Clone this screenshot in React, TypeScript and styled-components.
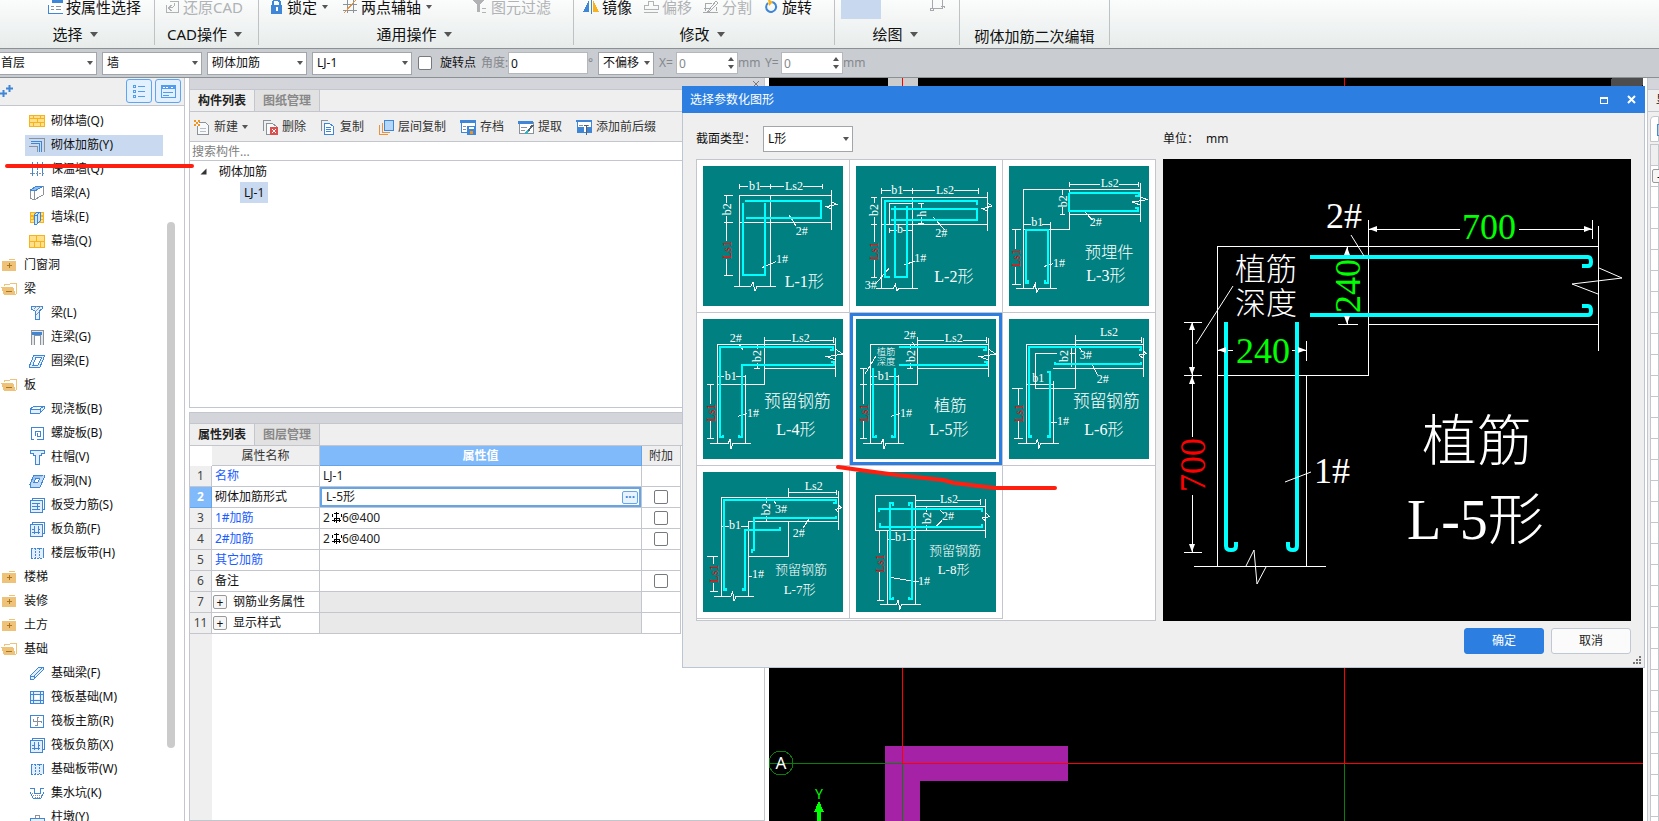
import React from 'react';
import styled, { createGlobalStyle } from 'styled-components';

const line = '#c3c6cc';
const face = '#efefef';
const blue = '#2c7fe0';
const uiFont = '"Noto Sans", "Noto Sans CJK SC", sans-serif';
const drawingFont = '"Liberation Serif", "Noto Sans CJK SC", serif';

const GlobalStyle = createGlobalStyle`
  *, *::before, *::after { box-sizing: border-box; }
  body { margin: 0; font: 12px/16px ${uiFont}; color: #111; background: #fff; }
  button, input, select { font: inherit; color: inherit; margin: 0; padding: 0; border: 0; background: none; }
  ul { margin: 0; padding: 0; list-style: none; }
  svg { display: block; flex: none; }
`;

const Page = styled.div`
  position: relative;
  display: flex;
  flex-direction: column;
  height: 100vh;
  overflow: hidden;
`;

/* ---------- ribbon ---------- */

const Ribbon = styled.header`
  display: flex;
  flex: none;
  height: 49px;
  border-bottom: 1px solid #8b9093;
  background: linear-gradient(#fbfcfc, #e7eceb);
  font-size: 15px;
`;

const RibbonGroup = styled.section<{ $width: number }>`
  width: ${p => p.$width}px;
  height: 45px;
  border-right: 1px solid #bfc2c4;
  display: flex;
  flex-direction: column;
`;

const RibbonTools = styled.div<{ $indent?: number }>`
  display: flex;
  align-items: center;
  height: 14px;
  flex: none;
  padding-left: ${p => p.$indent ?? 9}px;
  line-height: 14px;
`;

const RibbonButton = styled.button<{ $before?: number }>`
  display: flex;
  align-items: center;
  gap: 3px;
  height: 14px;
  margin-left: ${p => p.$before ?? 0}px;
  line-height: 14px;
  white-space: nowrap;
  &:disabled { color: #b0b2b4; }
`;

const DrawTool = styled.button`
  align-self: flex-start;
  width: 40px;
  height: 19px;
  margin-right: 48px;
  background: #c7d8ef;
`;

const RibbonLabel = styled.button<{ $plain?: boolean }>`
  display: flex;
  align-items: center;
  justify-content: center;
  gap: 7px;
  height: 20px;
  margin-top: ${p => (p.$plain ? 12 : 10)}px;
  padding-right: ${p => (p.$plain ? 0 : 4)}px;
  white-space: nowrap;
`;

const Caret = styled.span<{ $small?: boolean }>`
  border: solid transparent;
  border-width: ${p => (p.$small ? '4px 3px 0' : '5px 4px 0')};
  border-top-color: #555;
  ${RibbonButton} & { margin-left: 2px; }
`;

/* ---------- option bar ---------- */

const OptionBar = styled.div`
  display: flex;
  flex: none;
  align-items: center;
  height: 29px;
  border-bottom: 1px solid #8b9093;
  background: #c9ccd1;
  white-space: nowrap;
`;

const SelectBox = styled.span<{ $width: number; $height?: number; $flush?: boolean }>`
  position: relative;
  width: ${p => p.$width}px;
  height: ${p => p.$height ?? 23}px;
  margin-right: ${p => (p.$height ? 0 : 5)}px;
  select {
    width: 100%;
    height: 100%;
    padding-left: ${p => (p.$flush ? 1 : 4)}px;
    border: 1px solid #a2a5a9;
    border-left-width: ${p => (p.$flush ? 0 : 1)}px;
    border-radius: 0;
    background: #fff;
    appearance: none;
  }
  &::after {
    content: '';
    position: absolute;
    right: 4px;
    top: calc(50% - 2px);
    border: solid transparent;
    border-width: 4px 3px 0;
    border-top-color: #555;
    pointer-events: none;
  }
`;

const Tick = styled.input.attrs({ type: 'checkbox' })`
  appearance: none;
  width: 14px;
  height: 14px;
  border: 1px solid #77797c;
  border-radius: 2px;
  background: #fff;
  vertical-align: middle;
`;

const TickLabel = styled.label`
  display: flex;
  align-items: center;
  gap: 8px;
  margin: 0 5px 0 1px;
`;

const Muted = styled.label<{ $width: number }>`
  width: ${p => p.$width}px;
  color: #85888c;
`;

const BarInput = styled.input<{ $width: number }>`
  width: ${p => p.$width}px;
  height: 22px;
  padding-left: 2px;
  border: 1px solid #b4b7bb;
  background: #fff;
  &:disabled { color: #85888c; background: #fff; }
`;

const Spin = styled.span`
  position: relative;
  display: flex;
  &::before, &::after {
    content: '';
    position: absolute;
    right: 4px;
    border: 3px solid transparent;
  }
  &::before { top: 2px; border-bottom: 4px solid #555; }
  &::after { bottom: 2px; border-top: 4px solid #555; }
`;

/* ---------- work area ---------- */

const Work = styled.div`
  display: flex;
  flex: 1;
  min-height: 0;
  gap: 4px;
`;

const Navigator = styled.nav`
  position: relative;
  flex: none;
  width: 185px;
  border-right: 1px solid ${line};
  overflow: hidden;
`;

const NavHead = styled.div`
  display: flex;
  align-items: center;
  height: 28px;
  padding: 0 3px 2px 0;
  gap: 3px;
  border-bottom: 1px solid ${line};
  background: ${face};
`;

const ViewToggle = styled.button`
  display: grid;
  place-items: center;
  width: 26px;
  height: 24px;
  border: 1px solid #5aa5f5;
  border-radius: 3px;
  background: #e3f0fd;
`;

const NavSpacer = styled.span`
  flex: 1;
`;

const NavList = styled.ul`
  padding-top: 3px;
`;

const NavRow = styled.li`
  display: flex;
  align-items: center;
  height: 24px;
`;

const NavItem = styled.button<{ $group?: boolean; $active?: boolean }>`
  display: flex;
  align-items: center;
  gap: ${p => (p.$group ? 7 : 6)}px;
  height: 21px;
  width: ${p => (p.$group ? 162 : 138)}px;
  margin-left: ${p => (p.$group ? 1 : 25)}px;
  padding-left: ${p => (p.$group ? 0 : 4)}px;
  background: ${p => (p.$active ? '#c9d9ef' : 'none')};
  white-space: nowrap;
`;

const NavScroll = styled.div`
  position: absolute;
  left: 167px;
  top: 144px;
  width: 8px;
  height: 526px;
  border-radius: 4px;
  background: #cbcbcb;
`;

const Middle = styled.div`
  display: flex;
  flex-direction: column;
  flex: none;
  gap: 4px;
  width: 576px;
`;

const Pane = styled.section<{ $height?: number }>`
  display: flex;
  flex-direction: column;
  flex: ${p => (p.$height ? `0 0 ${p.$height}px` : '1')};
  min-height: 0;
  border: 1px solid ${line};
  border-top-width: ${p => (p.$height ? 0 : 1)}px;
  overflow: hidden;
`;

const PaneGrip = styled.div<{ $thin?: boolean }>`
  display: flex;
  align-items: center;
  justify-content: flex-end;
  flex: none;
  height: ${p => (p.$thin ? 11 : 12)}px;
  padding-right: 5px;
  border-bottom: 1px solid ${line};
  background: #d3d5da;
`;

const Tabs = styled.div`
  display: flex;
  flex: none;
  height: 22px;
  border-bottom: 1px solid ${line};
  background: ${face};
`;

const Tab = styled.button<{ $active?: boolean }>`
  width: 65px;
  border-right: 1px solid ${line};
  background: ${p => (p.$active ? face : '#e1e1e1')};
  color: ${p => (p.$active ? '#222' : '#888')};
  font-weight: 600;
  white-space: nowrap;
`;

const Tools = styled.div`
  display: flex;
  align-items: center;
  flex: none;
  gap: 14px;
  height: 30px;
  padding-left: 4px;
  border-bottom: 1px solid ${line};
  background: ${face};
`;

const Tool = styled.button`
  display: flex;
  align-items: center;
  gap: 4px;
  color: #333;
  white-space: nowrap;
`;

const Search = styled.input`
  flex: none;
  height: 19px;
  padding-left: 2px;
  border-bottom: 1px solid ${line};
  &::placeholder { color: #808080; opacity: 1; }
`;

const Tree = styled.ul`
  flex: 1;
`;

const TreeRow = styled.button`
  display: flex;
  align-items: center;
  gap: 12px;
  height: 21px;
  padding-left: 10px;
`;

const TreeLeaf = styled.button`
  height: 21px;
  margin-left: 50px;
  padding: 0 4px;
  background: #c9d9ef;
`;

/* ---------- property table ---------- */

const TableArea = styled.div`
  flex: 1;
  background: linear-gradient(to right, ${face} 22px, #fff 22px);
`;

const PropTable = styled.table`
  width: 491px;
  table-layout: fixed;
  border-spacing: 0;
  background: #fff;
  th, td {
    height: 21px;
    padding: 0 3px;
    border: solid ${line};
    border-width: 0 1px 1px 0;
    font-weight: 400;
    text-align: left;
    white-space: nowrap;
  }
  thead th { height: 20px; text-align: center; background: ${face}; color: #333; }
  thead th:first-child { background: #fff; border-color: #fff; }
  tbody th { text-align: center; background: ${face}; color: #444; padding: 0; }
  td:last-child { text-align: center; padding: 0; line-height: 0; }
`;

const ValueHead = styled.th`
  && { background: #80bafa; border-color: #64a5ea; color: #fff; font-weight: 600; }
`;

const RowHead = styled.th<{ $active: boolean }>`
  ${p => p.$active && '&& { background: #80bafa; border-color: #64a5ea; color: #fff; font-weight: 700; }'}
`;

const NameCell = styled.td<{ $link?: boolean }>`
  color: ${p => (p.$link ? '#1a5cff' : '#111')};
`;

const NameFlex = styled.span`
  display: flex;
  align-items: center;
  gap: 6px;
  margin-left: -2px;
`;

const ValueCell = styled.td<{ $state?: 'edit' | 'off' }>`
  background: ${p => (p.$state === 'off' ? '#e9e9e9' : '#fff')};
  ${p => p.$state === 'edit' && 'box-shadow: inset 0 0 0 2px #64a5ea;'}
`;

const ValueFlex = styled.span`
  display: flex;
  align-items: center;
  color: #222;
  input { flex: 1; min-width: 0; padding-left: 3px; }
`;

const Expand = styled.button`
  position: relative;
  width: 14px;
  height: 14px;
  border: 1px solid #999;
  border-radius: 2px;
  background: #f6f6f6;
  line-height: 11px;
`;

const MoreButton = styled.button`
  width: 16px;
  height: 13px;
  border: 1px solid #64a5ea;
  border-radius: 2px;
  background: #e9f3fe;
  color: #3c86d8;
  font-weight: 700;
  line-height: 6px;
`;

/* ---------- model view and right dock ---------- */

const Canvas = styled.main`
  flex: 1;
  min-width: 0;
  background: #000;
`;

const Dock = styled.aside`
  position: relative;
  flex: none;
  width: 12px;
  border-left: 1px solid ${line};
  background: ${face};
  overflow: hidden;
`;

const DockTab = styled.div`
  height: 22px;
  padding: 2px 0 0 8px;
  border-bottom: 1px solid ${line};
  white-space: nowrap;
`;

const DockPage = styled.div`
  height: 26px;
  margin: 4px 0 0 2px;
  padding: 7px 0 0 6px;
  border: 1px solid ${line};
  border-radius: 4px 0 0 0;
  background: #fff;
`;

const DockMark = styled.span`
  display: block;
  width: 6px;
  height: 12px;
  border: 1px solid #4a8bd6;
`;

const DockGrid = styled.div`
  height: 100%;
  margin: 2px 0 0 2px;
  border: 1px solid ${line};
  background: repeating-linear-gradient(#fff 0 20px, ${line} 20px 21px);
`;

const DockHead = styled.div`
  height: 21px;
  border-bottom: 1px solid ${line};
  background: ${face};
`;

const DockExpand = styled(Expand)`
  display: block;
  margin: 3px 0 0 1px;
`;

/* ---------- dialog ---------- */

const Dialog = styled.div`
  position: absolute;
  left: 682px;
  right: 14px;
  top: 86px;
  border: solid #bcc6d2;
  border-width: 0 1px 1px;
  background: ${face};
`;

const DialogTitle = styled.div`
  display: flex;
  align-items: center;
  height: 27px;
  margin: 0 -1px;
  padding: 0 9px 0 8px;
  background: ${blue};
  color: #fff;
  h2 { flex: 1; margin: 0; font-size: 12px; font-weight: 400; }
`;

const TitleButton = styled.button`
  margin-left: 19px;
`;

const DialogGrid = styled.div`
  display: grid;
  grid-template-columns: 460px 1fr;
  column-gap: 7px;
  padding: 0 13px;
`;

const Field = styled.div`
  display: flex;
  align-items: center;
  gap: 7px;
  height: 46px;
  padding-top: 6px;
`;

const Gallery = styled.div`
  display: grid;
  grid-template-columns: 153px 153px 152px;
  grid-template-rows: 153px 153px 153px;
  border: 1px solid ${line};
  background: #fff;
`;

const Shape = styled.button<{ $active: boolean }>`
  display: grid;
  place-items: center;
  border: solid ${line};
  border-width: 0 1px 1px 0;
  ${p => p.$active && `box-shadow: inset 0 0 0 3px ${blue};`}
  &:nth-child(3n) { border-right-width: 0; }
`;

const Preview = styled.div`
  background: #000;
  overflow: hidden;
`;

const Footer = styled.div`
  display: flex;
  justify-content: flex-end;
  gap: 7px;
  padding: 7px 13px 13px;
`;

const DialogButton = styled.button<{ $primary?: boolean }>`
  width: 80px;
  height: 26px;
  border: 1px solid ${p => (p.$primary ? blue : '#c0c8d4')};
  border-radius: 3px;
  background: ${p => (p.$primary ? blue : '#fbfbfb')};
  color: ${p => (p.$primary ? '#fff' : '#222')};
`;

const Grip = styled.svg`
  position: absolute;
  right: 3px;
  bottom: 3px;
`;

const Markup = styled.svg`
  position: absolute;
  left: 0;
  top: 0;
  width: 100%;
  height: 100%;
  pointer-events: none;
`;

/* ---------- icons ---------- */

const B = '#3f86d6';
const L = '#e3effc';
const G = '#8a929a';
const Y = '#f7b21c';
const F = '#efc27a';

const icons: Record<string, React.ReactNode> = {
  pick: <><path d="M5 0H16V14H1V6" fill="#fff" stroke={B} /><path d="M5 0H16V4H5Z" fill={B} /><path d="M4 7H7M9 7H14M4 10H7M9 10H14" stroke={G} /></>,
  restore: <g fill="none" stroke="#b0b2b4"><path d="M6 2H14V13H2V6" /><path d="M11 4Q11 9 5 9M8 6L4 9L8 12" /></g>,
  lock: <><path d="M5 7V4a3 3 0 0 1 7 0V7" fill="none" stroke={B} strokeWidth="2" /><rect x="3" y="6" width="11" height="9" rx="1" fill={B} /><path d="M8.500 8V12" stroke="#fff" strokeWidth="2" /></>,
  axis: <g fill="none" stroke={G}><path d="M1 5H15M1 11H15M5 1V14M11 1V14" /><path d="M2 14L14 1" stroke="#e8923c" /></g>,
  filter: <><path d="M1 1H12L8 6V13H5V6Z" fill="#b0b2b4" /><path d="M10 9H14M10 13H14" stroke="#b0b2b4" /></>,
  mirror: <><path d="M0 13L6 1V13Z" fill={B} /><path d="M8 0V15" stroke={B} /><path d="M10 1L16 13H10Z" fill={Y} /></>,
  offset: <g fill="none" stroke="#b0b2b4"><path d="M5 2H10V6H15V10H1V6H5Z" /><path d="M1 13H15" /></g>,
  split: <g fill="none" stroke="#a7aaad"><path d="M2 4H9M2 4V12M13 8V12M0 13H15M1 9H6" /><path d="M5 12L13 2L15 4L7 12Z" /></g>,
  rotate: <g shapeRendering="auto"><path d="M9 3a5 5 0 1 1-4 1" fill="none" stroke={B} strokeWidth="2" /><path d="M5 0L10 3L6 7Z" fill={Y} /></g>,
  rect: <path d="M3 0V9H13V1M1 9H4V11H1ZM12 7H15V9" fill="none" stroke="#a7aaad" />,
  brick: <><rect x="0" y="2" width="16" height="12" fill={Y} /><path d="M1 3H4V5H1zM5 3H11V5H5zM12 3H15V5H12zM1 6H8V9H1zM9 6H15V9H9zM1 10H4V13H1zM5 10H11V13H5zM12 10H15V13H12z" fill="#ffe08a" /></>,
  tie: <g fill="none"><path d="M0 1H15V15" stroke={G} /><path d="M2 4H12V15M2 6H10V15" stroke={B} /><path d="M0 9H8V15" stroke={G} /></g>,
  insul: <g fill="none" stroke={B}><path d="M3 1V15M13 1V15" /><path d="M1 5H15M1 12H15" stroke={G} strokeDasharray="2 1" /><path d="M8 1V15" strokeDasharray="2 1" /></g>,
  hidden: <><path d="M1 5L9 1H14V10L5 15L1 13Z" fill="#fff" stroke={G} /><path d="M1 5L8 1H14L6 6Z" fill="#8fbdf0" stroke={B} /><path d="M5 6V15" stroke={G} /></>,
  pier: <><rect x="1" y="3" width="14" height="11" fill={Y} /><path d="M2 4H5V6H2zM2 8H4V10H2zM2 11H5V13H2zM12 4H14V6H12zM12 8H14V10H12zM12 11H14V13H12z" fill="#ffe08a" /><path d="M5 6L8 3H11V12L8 15H5Z" fill="#d2e5fb" stroke={B} /><path d="M8 6V14M5 6H8L11 3" fill="none" stroke={B} /></>,
  curtain: <><rect x="0" y="2" width="16" height="13" fill={Y} /><path d="M1 3H7V8H1zM8 3H15V8H8zM1 9H5V14H1zM6 9H11V14H6zM12 9H15V14H12z" fill="#ffe08a" /></>,
  beam: <><path d="M2 1H13V4L10 6V14H6V6L2 4Z" fill={L} stroke={B} /><path d="M5 4L8 1M7 6L12 1M7 10L10 7" stroke={G} /></>,
  link: <><path d="M2 1H14V16H11V6H5V16H2Z" fill="#e4e6e8" stroke={G} /><path d="M3 3H13V6H3Z" fill={B} /></>,
  ring: <><path d="M5 2H16L11 14H0Z" fill={L} stroke={B} /><path d="M7 4H13L9 12H4Z" fill="#fff" stroke={B} /></>,
  slab: <path d="M1 8L6 5H15V8L11 12H1ZM1 8H11L15 5M11 8V12" fill={L} stroke={B} />,
  spiral: <path d="M5 14H2V2H14V14H8M6 11V6H11V11H8V8" fill="none" stroke={B} />,
  cap: <path d="M1 1H15V4H12V6H10V15H6V6H4V4H1Z" fill={L} stroke={B} />,
  hole: <><path d="M5 2H15L11 11H1Z" fill="#9dc3ef" stroke={B} /><path d="M1 11V14H11L15 5V2" fill="#c3dbf6" stroke={B} /><path d="M7 5H11L9 9H5Z" fill="#fff" stroke={B} /></>,
  rebarS: <><path d="M3 3V1H15V12H13" fill="#fff" stroke={B} /><rect x="1" y="3" width="12" height="12" fill={L} stroke={B} /><path d="M3 6H11M3 9H11M3 12H11M8 6V12" stroke={B} /></>,
  rebarF: <><path d="M3 3V1H15V12H13" fill="#fff" stroke={B} /><rect x="1" y="3" width="12" height="12" fill={L} stroke={B} /><path d="M5 5V13M9 5V13M3 11H11M9 8H11M3 8H5" stroke={B} /></>,
  strip: <><rect x="2" y="3" width="12" height="10" fill={L} /><path d="M2 3H14M2 13H14" stroke={B} strokeDasharray="2 1" /><path d="M2 3V13M14 3V13" stroke={B} /><path d="M6 3V13M10 3V13" stroke={B} strokeDasharray="2 1" /></>,
  fbeam: <path d="M1 11L10 2H14V5L5 14H1ZM1 11H5V14M5 11L14 2" fill={L} stroke={B} />,
  raft: <><rect x="1" y="2" width="13" height="12" fill={L} stroke={B} /><path d="M1 5H14M1 11H14M4 2V14M11 2V14" fill="none" stroke={B} /><rect x="6" y="6" width="4" height="4" fill="#fff" /></>,
  raftR: <><rect x="1" y="2" width="13" height="12" fill="#fff" stroke={B} /><path d="M8 4V12H6M4 8H12V10M4 8V6M8 4H10" fill="none" stroke={G} /></>,
  pit: <><path d="M1 3H5V8H11V3H15M1 7L4 13H12L15 7" fill="none" stroke={B} /><path d="M3 8H5M4 10H13M6 12H11" stroke={G} strokeDasharray="1 1" /></>,
  pierBase: <><path d="M1 9H15V15H1Z" fill={L} stroke={B} /><path d="M6 9V6H10V9" fill="#fff" stroke={G} /></>,
  plusFolder: <><path d="M1 4H15V14H1Z" fill={F} /><path d="M8 2H14V3H8Z" fill={F} /><path d="M8 6V11M5.500 8.500H10.500" stroke="#a9761f" strokeWidth="1" /></>,
  openFolder: <><path d="M3 5V3H9L10 2H15V13" fill="none" stroke={F} /><path d="M0 6H12L15 14H3Z" fill={F} /><path d="M5 10H11" stroke="#a9761f" /></>,
  newDoc: <><path d="M5 3H11L14 6V15H3V7" fill="#f8f9fa" stroke={G} /><path d="M6 9H12M6 12H12" stroke="#b9bdc2" /><path d="M0 1H2V3H4V1H6V3H4V5H6V7H4V5H2V7H0V5H2V3H0Z" fill="#f0941e" /></>,
  del: <><path d="M1 12V1H9" fill="none" stroke={G} /><path d="M8 15H4V4H10L14 7V8" fill="#f8f9fa" stroke={G} /><rect x="8" y="8" width="8" height="8" fill="#dc4f4f" /><path d="M10 10L14 14M14 10L10 14" stroke="#fff" /></>,
  copy: <><path d="M1 12V1H8" fill="none" stroke={G} /><path d="M4 4H9L13 7V15H4Z" fill="#fff" stroke={B} /><path d="M6 8H11M6 10H11M6 12H11" stroke={B} /></>,
  layers: <><path d="M1 6V15H10" fill="none" stroke="#e8923c" /><path d="M4 4V13H12" fill="none" stroke="#e8923c" /><rect x="6" y="1" width="9" height="10" fill="#b5d6fb" stroke={B} /></>,
  archive: <><path d="M1 1H15V13H1Z" fill="#fff" stroke={B} /><path d="M0 1H15V4H0Z" fill={B} /><path d="M3 7H6M3 10H6" stroke={G} /><rect x="7" y="7" width="9" height="9" fill={B} /><path d="M9 8H14V10H9Z" fill="#fff" /><path d="M10 12H13V15H10Z" fill="#f0941e" /></>,
  extract: <><path d="M1 3H15V14H1Z" fill="#fff" stroke={G} /><path d="M0 2H15V5H0Z" fill={B} /><path d="M3 8H9M3 11H7" stroke={G} /><path d="M9 13L15 6" stroke="#55606b" strokeWidth="2" /><path d="M7 15L10 12" stroke="#29b6c8" strokeWidth="2" /></>,
  affix: <><path d="M1 1H15V13H1Z" fill="#fff" stroke={B} /><path d="M0 1H15V3H0Z" fill={B} /><path d="M3 6H7M10 6H13" stroke={G} /><path d="M2 8H8V13H2zM11 8H16V13H11z" fill={B} /><path d="M10 6V16M8 6H12M8 16H12" stroke="#55606b" /></>,
};

const Icon = ({ name }: { name: string }) => (
  <svg width="16" height="16" viewBox="0 0 16 16" aria-hidden="true" shapeRendering="crispEdges">{icons[name]}</svg>
);

/* ---------- reinforcement drawings ---------- */

type Note = [text: string, x: number, y: number, size?: number];

interface ShapeSpec {
  name: string;
  origin: [number, number];
  outline: string;
  bars: string;
  notes: Note[];
  width: [string, number, number][];
  length: [number, number];
}

const shapes: ShapeSpec[] = [
  {
    name: 'L-1形', origin: [69, 48],
    outline: 'M179 409V136H455M179 217H455M271 136V409M455 121V240M162 409H213L219 397L225 423L231 409H288M455 155L470 163L440 170L455 178M179 101V118M271 101V118M427 101V118M179 109H205M241 109H313M369 109H427M131 136H159M131 217H159M131 376H159M139 136V160M139 197V272M139 328V376M328 196L348 228M246 353L288 335',
    bars: 'M195 153H424V204H198M189 159V375H255V159',
    notes: [['b1', 207, 119], ['Ls2', 315, 119], ['2#', 347, 254], ['1#', 288, 338], ['L-1形', 314, 410, 48]],
    width: [['b2', 142, 178]], length: [142, 300],
  },
  {
    name: 'L-2形', origin: [528, 48],
    outline: 'M605 414V142H922M605 223H922M697 142V414M922 127V242M588 414H640L646 402L651 424L657 414H714M628 223V160H697M605 114V131M697 114V131M895 114V131M605 122H632M668 122H766M822 122H895M573 142H591M573 223H591M573 382H591M583 142V160M583 200V276M583 330V382M715 160H733M725 160V178M725 202V223M715 220H733M628 234V248M628 241H650M668 241H697M760 201L794 240M673 344L704 334M627 355L590 398M922 159L937 168L907 176L922 184',
    bars: 'M630 381H615V153H891V165M633 177H891V210H633M645 168V381H681V168',
    notes: [['b1', 634, 132], ['Ls2', 768, 132], ['b', 651, 250], ['2#', 766, 262], ['1#', 703, 335], ['3#', 554, 418], ['L-2形', 763, 395, 48]],
    width: [['b2', 583, 180], ['h', 727, 191]], length: [583, 303],
  },
  {
    name: 'L-3形', origin: [987, 48],
    outline: 'M1031 414V118H1381M1168 118V238H1031M1168 193H1381M1381 100V216M1111 238V414M1009 414H1060L1066 400L1070 430L1076 414H1131M1168 96V112M1375 96V112M1168 104H1260M1317 104H1375M1141 193H1156M1148 118V136M1148 172V193M1031 216V238M1111 216V238M1031 224H1054M1086 224H1111M996 238H1022M996 404H1022M1007 238V296M1007 350V404M1210 180L1237 210M1093 349L1120 341M1381 141L1403 149L1356 156L1381 165',
    bars: 'M1168 129H1376V138H1366M1168 129V183H1374V174H1366M1045 390V399H1038V241H1105V399H1096V390',
    notes: [['Ls2', 1262, 111], ['b1', 1054, 228], ['2#', 1229, 229], ['1#', 1119, 350], ['预埋件', 1214, 325, 49], ['L-3形', 1219, 392, 48]],
    width: [['b2', 1150, 154]], length: [1009, 324],
  },
  {
    name: 'L-4形', origin: [69, 507],
    outline: 'M113 880V583H466M253 560V703H113M253 655H466M466 564V680M197 674V880M90 880H145L150 866L153 896L159 880H212M461 562V578M253 570H333M389 570H461M231 583V598M231 640V655M222 655H240M113 680H133M168 680H197M82 703H103M82 865H103M92 703V762M92 814V865M178 583L188 599M175 799L200 791M466 597L488 612L441 620L466 630',
    bars: 'M129 855V862H119V591H460V600H450M176 855V862H186V645H461V637H452',
    notes: [['2#', 149, 575], ['Ls2', 335, 575], ['b1', 134, 690], ['1#', 201, 800], ['预留钢筋', 252, 772, 50], ['L-4形', 289, 856, 48]],
    width: [['b2', 231, 618]], length: [94, 788],
  },
  {
    name: 'L-5形', origin: [528, 507],
    outline: 'M572 880V583H925M712 560V703H572M712 655H925M925 564V680M656 674V880M549 880H604L609 866L612 896L618 880H671M920 562V578M712 570H793M848 570H920M690 583V598M690 640V655M681 655H699M572 680H592M627 680H656M541 655H562M541 703H562M541 865H562M550 655V762M550 814V865M697 575L704 590M588 618L555 672M634 799L659 791M925 597L947 612L900 620L925 630',
    bars: 'M657 591H919V600H909M657 645H920V637H911M588 855V862H578V655M635 855V862H645V655',
    notes: [['2#', 671, 568], ['Ls2', 794, 575], ['b1', 593, 690], ['1#', 660, 800], ['植筋', 590, 614, 28], ['深度', 590, 646, 28], ['植筋', 762, 783, 49], ['L-5形', 748, 856, 48]],
    width: [['b2', 693, 618]], length: [553, 788],
  },
  {
    name: 'L-6形', origin: [987, 507],
    outline: 'M1040 880V583H1390M1120 692V880M1120 655H1390M1390 564V680M1131 610H1066V715H1186V555M1170 610H1186M1040 703H1120M1014 880H1068L1073 866L1076 896L1082 880H1136M1384 562V578M1186 570H1384M1174 591V650M1197 591L1207 606M1237 645L1253 675M996 715H1029M1003 865H1029M1015 715V764M1015 814V865M1111 818H1131M1390 603L1400 611L1376 615L1390 625',
    bars: 'M1052 855V862H1046V591H1384V601H1376M1103 855V862H1109V667H1101M1125 636V643H1383V636',
    notes: [['Ls2', 1260, 557], ['3#', 1199, 628], ['2#', 1250, 700], ['b1', 1057, 697], ['1#', 1131, 824], ['预留钢筋', 1179, 772, 50], ['L-6形', 1213, 856, 48]],
    width: [['b2', 1153, 618]], length: [1018, 789],
  },
  {
    name: 'L-7形', origin: [69, 36],
    outline: 'M125 408V112H475M475 94V209M205 408V184H475M325 184V289H205M102 408H153L158 394L162 424L168 408H221M325 84V112M470 90V106M325 97H470M260 112V130M260 167V184M125 198H146M182 198H205M82 289H114M90 395H114M100 289V312M100 368V395M280 120L288 132M388 176L370 203M205 349H216M475 134L484 144L466 148L475 156',
    bars: 'M137 384V391H131V120H467V129H459M190 384V391H195V210H300V200M217 278V271H221V174H468V167',
    notes: [['Ls2', 374, 90], ['3#', 285, 158], ['2#', 338, 230], ['b1', 147, 207], ['1#', 216, 353], ['预留钢筋', 285, 343, 39], ['L-7形', 311, 401, 39]],
    width: [['b2', 258, 148]], length: [103, 341],
  },
  {
    name: 'L-8形', origin: [528, 36],
    outline: 'M586 106H706V211H586ZM706 139H916M706 211H916M916 117V234M623 211V433M706 211V433M600 433H650L655 419L659 449L665 433H722M902 116V134M706 121H779M832 121H902M740 139V156M740 194V211M623 238H644M680 238H706M590 211H608M590 421H612M598 211V280M598 335V421M778 148L792 162M768 200L786 182M630 352L716 366M916 158L929 170L906 174L916 182',
    bars: 'M597 157V148H907V157M600 190V200H907V191M640 137V129H631V416H640V411M687 137V129H697V416H687V411',
    notes: [['Ls2', 780, 128], ['2#', 786, 181], ['b1', 645, 243], ['1#', 714, 376], ['预留钢筋', 747, 286, 39], ['L-8形', 773, 343, 39]],
    width: [['b2', 742, 174]], length: [601, 310],
  },
];

const Turned = ({ x, y, size, fill, children }: { x: number; y: number; size: number; fill: string; children: string }) => (
  <text transform={`translate(${x} ${y}) rotate(-90)`} fontSize={size} fill={fill} textAnchor="middle">{children}</text>
);

const ShapeDrawing = ({ spec }: { spec: ShapeSpec }) => (
  <svg width="140" height="140" viewBox={`${spec.origin[0]} ${spec.origin[1]} 420 420`} fontFamily={drawingFont} fontWeight="300">
    <rect x={spec.origin[0]} y={spec.origin[1]} width="420" height="420" fill="#008080" />
    <path d={spec.outline} fill="none" stroke="#fff" strokeWidth="3" shapeRendering="crispEdges" />
    <path d={spec.bars} fill="none" stroke="#0ff" strokeWidth="6" shapeRendering="crispEdges" />
    {spec.notes.map(([text, x, y, size = 36], i) => (
      <text key={i} x={x} y={y} fontSize={size} fill="#fff">{text}</text>
    ))}
    {spec.width.map(([text, x, y]) => <Turned key={text} x={x + 11} y={y} size={36} fill="#fff">{text}</Turned>)}
    <Turned x={spec.length[0] + 11} y={spec.length[1]} size={36} fill="#f00">Ls1</Turned>
  </svg>
);

const arrow = (x: number, y: number, dx: number, dy: number) =>
  `M${x} ${y}L${x + dx * 8 - dy * 3} ${y + dy * 8 - dx * 3}L${x + dx * 8 + dy * 3} ${y + dy * 8 + dx * 3}Z`;

const heads = [
  arrow(206, 70, 1, 0), arrow(429, 70, -1, 0),
  arrow(184, 88, 0, 1), arrow(184, 165, 0, -1),
  arrow(55, 191, 1, 0), arrow(143, 191, -1, 0),
  arrow(29, 163, 0, 1), arrow(29, 216, 0, -1),
  arrow(29, 217, 0, 1), arrow(29, 393, 0, -1),
].join('');

const DetailDrawing = () => (
  <svg width="468" height="462" viewBox="0 0 468 462" fontFamily={drawingFont} fontWeight="300" fill="none">
    <g stroke="#fff" shapeRendering="crispEdges">
      <path d="M54.500 407V87.500H435.500M205.500 61V216.500H54.500M205.500 165.500H435.500M143.500 216V407M435.500 67V192M31 407.500H163" />
      <path d="M429.500 61V80M206 70.500H297M356 70.500H429M184.500 88V98M184.500 155V165M175 165.500H195M55 191.500H70M129 191.500H143M143.500 182V202" />
      <path d="M21 163.500H39M21 216.500H39M21 393.500H39M29.500 163V278M29.500 336V393" />
    </g>
    <path d="M147 98H425Q428 98 428 103Q428 107 425 107H419M147 156H425Q428 156 428 152Q428 147 425 147H419M63 163V387Q63 391 68 391Q73 391 73 387V383M134 163V387Q134 391 130 391Q125 391 125 387V383" stroke="#0ff" strokeWidth="4" />
    <path d="M83 407L91 391L94 425L103 408M436 109L459 119L409 125L435 135M188 76L201 97M70 127L33 185M122 323L148 313" stroke="#fff" />
    <path d={heads} fill="#fff" />
    <g fill="#fff" fontSize="36">
      <text x="163" y="69">2#</text>
      <text x="151" y="324">1#</text>
      <text x="72" y="121" fontSize="31">植筋</text>
      <text x="72" y="155" fontSize="31">深度</text>
      <text x="259" y="301" fontSize="55">植筋</text>
      <text x="244" y="380" fontSize="56">L-5形</text>
    </g>
    <g fill="#0f0" fontSize="36">
      <text x="299" y="80">700</text>
      <text x="73" y="204">240</text>
    </g>
    <Turned x={197} y={127} size={36} fill="#0f0">240</Turned>
    <Turned x={42} y={306} size={36} fill="#f00">700</Turned>
  </svg>
);

const ModelView = () => (
  <svg width="100%" height="100%" shapeRendering="crispEdges">
    <rect x="119" y="0" width="30" height="8" fill="#ccc" />
    <rect x="842" y="0" width="32" height="8" rx="2" fill="#4d4d4d" />
    <path d="M116 668H299V703H151V1200H116Z" fill="#a521a5" />
    <path d="M133.500 0V685M575.500 0V685" stroke="#f00" />
    <line x1="133" y1="685.500" x2="100%" y2="685.500" stroke="#f00" />
    <path d="M0 685.500H133M133.500 686V1200M575.500 686V1200" stroke="#0a7d0a" />
    <circle cx="12" cy="685" r="12" fill="none" stroke="#0a7d0a" />
    <g textAnchor="middle" fontFamily={uiFont}>
      <text x="12" y="691" fontSize="17" fill="#fff">A</text>
      <text x="50" y="721" fontSize="14" fill="#0f0">Y</text>
    </g>
    <path d="M50 723L55 734H52V1200H48V734H45Z" fill="#0f0" />
  </svg>
);

const RebarMark = () => (
  <svg width="12" height="14" viewBox="0 0 12 14" fill="none" stroke="#000" shapeRendering="crispEdges">
    <path d="M4 2H9M4 7H9M2 3V6M11 3V6M6 1V12M2 9H11M4 7V11M9 7V11" />
  </svg>
);

/* ---------- data ---------- */

const navigation: [label: string, icon: string][] = [
  ['砌体墙(Q)', 'brick'], ['砌体加筋(Y)', 'tie'], ['保温墙(Q)', 'insul'], ['暗梁(A)', 'hidden'],
  ['墙垛(E)', 'pier'], ['幕墙(Q)', 'curtain'], ['门窗洞', 'plusFolder'], ['梁', 'openFolder'],
  ['梁(L)', 'beam'], ['连梁(G)', 'link'], ['圈梁(E)', 'ring'], ['板', 'openFolder'],
  ['现浇板(B)', 'slab'], ['螺旋板(B)', 'spiral'], ['柱帽(V)', 'cap'], ['板洞(N)', 'hole'],
  ['板受力筋(S)', 'rebarS'], ['板负筋(F)', 'rebarF'], ['楼层板带(H)', 'strip'],
  ['楼梯', 'plusFolder'], ['装修', 'plusFolder'], ['土方', 'plusFolder'], ['基础', 'openFolder'],
  ['基础梁(F)', 'fbeam'], ['筏板基础(M)', 'raft'], ['筏板主筋(R)', 'raftR'], ['筏板负筋(X)', 'rebarF'],
  ['基础板带(W)', 'strip'], ['集水坑(K)', 'pit'], ['柱墩(Y)', 'pierBase'],
];

const tools: [label: string, icon: string][] = [
  ['新建', 'newDoc'], ['删除', 'del'], ['复制', 'copy'], ['层间复制', 'layers'],
  ['存档', 'archive'], ['提取', 'extract'], ['添加前后缀', 'affix'],
];

interface Property {
  no: number;
  name: string;
  value?: string;
  rebar?: boolean;
  link?: boolean;
  extra?: boolean;
  group?: boolean;
}

const properties: Property[] = [
  { no: 1, name: '名称', value: 'LJ-1', link: true },
  { no: 2, name: '砌体加筋形式', value: 'L-5形', extra: true },
  { no: 3, name: '1#加筋', rebar: true, link: true, extra: true },
  { no: 4, name: '2#加筋', rebar: true, link: true, extra: true },
  { no: 5, name: '其它加筋', link: true },
  { no: 6, name: '备注', extra: true },
  { no: 7, name: '钢筋业务属性', group: true },
  { no: 11, name: '显示样式', group: true },
];

const Drop = ({ label, value, width, height, flush }: { label: string; value: string; width: number; height?: number; flush?: boolean }) => (
  <SelectBox $width={width} $height={height} $flush={flush}>
    <select aria-label={label} defaultValue={value}><option>{value}</option></select>
  </SelectBox>
);

const PropertyRow = ({ item }: { item: Property }) => {
  const editing = item.no === 2;
  return (
    <tr>
      <RowHead scope="row" $active={editing}>{item.no}</RowHead>
      <NameCell $link={item.link}>
        {item.group ? <NameFlex><Expand aria-label={`展开${item.name}`}>+</Expand>{item.name}</NameFlex> : item.name}
      </NameCell>
      <ValueCell $state={editing ? 'edit' : item.group ? 'off' : undefined}>
        <ValueFlex>
          {editing && <><input aria-label={item.name} defaultValue={item.value} /><MoreButton aria-label="选择形式">···</MoreButton></>}
          {item.rebar && <><span>2</span><RebarMark /><span>6@400</span></>}
          {!editing && item.value}
        </ValueFlex>
      </ValueCell>
      <td>{item.extra && <Tick aria-label={`${item.name}附加`} />}</td>
    </tr>
  );
};

const ShapeDialog = () => (
  <Dialog role="dialog" aria-label="选择参数化图形">
    <DialogTitle>
      <h2>选择参数化图形</h2>
      <TitleButton aria-label="最大化">
        <svg width="9" height="8"><path d="M1 1H8V7H1ZM1 2H8" fill="none" stroke="#fff" strokeWidth="1" shapeRendering="crispEdges" /></svg>
      </TitleButton>
      <TitleButton aria-label="关闭">
        <svg width="9" height="9"><path d="M1 1L8 8M8 1L1 8" stroke="#fff" strokeWidth="2" /></svg>
      </TitleButton>
    </DialogTitle>
    <DialogGrid>
      <Field>截面类型：<Drop label="截面类型" value="L形" width={90} height={26} /></Field>
      <Field><span>单位：</span><span>mm</span></Field>
      <Gallery>
        {shapes.map(spec => (
          <Shape key={spec.name} $active={spec.name === 'L-5形'} aria-label={spec.name}>
            <ShapeDrawing spec={spec} />
          </Shape>
        ))}
      </Gallery>
      <Preview><DetailDrawing /></Preview>
    </DialogGrid>
    <Footer>
      <DialogButton $primary>确定</DialogButton>
      <DialogButton>取消</DialogButton>
    </Footer>
    <Grip width="8" height="8"><path d="M6 0H8V2H6zM3 3H5V5H3zM6 3H8V5H6zM0 6H2V8H0zM3 6H5V8H3zM6 6H8V8H6z" fill="#777" /></Grip>
  </Dialog>
);

export default function App() {
  return (
    <Page>
      <GlobalStyle />
      <Ribbon>
        <RibbonGroup $width={155}>
          <RibbonTools $indent={47}><RibbonButton><Icon name="pick" />按属性选择</RibbonButton></RibbonTools>
          <RibbonLabel>选择<Caret /></RibbonLabel>
        </RibbonGroup>
        <RibbonGroup $width={104}>
          <RibbonTools><RibbonButton disabled><Icon name="restore" />还原CAD</RibbonButton></RibbonTools>
          <RibbonLabel>CAD操作<Caret /></RibbonLabel>
        </RibbonGroup>
        <RibbonGroup $width={315}>
          <RibbonTools>
            <RibbonButton><Icon name="lock" />锁定<Caret $small /></RibbonButton>
            <RibbonButton $before={14}><Icon name="axis" />两点辅轴<Caret $small /></RibbonButton>
            <RibbonButton $before={40} disabled><Icon name="filter" />图元过滤</RibbonButton>
          </RibbonTools>
          <RibbonLabel>通用操作<Caret /></RibbonLabel>
        </RibbonGroup>
        <RibbonGroup $width={261}>
          <RibbonTools>
            <RibbonButton><Icon name="mirror" />镜像</RibbonButton>
            <RibbonButton $before={11} disabled><Icon name="offset" />偏移</RibbonButton>
            <RibbonButton $before={11} disabled><Icon name="split" />分割</RibbonButton>
            <RibbonButton $before={11}><Icon name="rotate" />旋转</RibbonButton>
          </RibbonTools>
          <RibbonLabel>修改<Caret /></RibbonLabel>
        </RibbonGroup>
        <RibbonGroup $width={125}>
          <RibbonTools $indent={6}>
            <DrawTool aria-label="绘制" />
            <RibbonButton aria-label="矩形"><Icon name="rect" /></RibbonButton>
          </RibbonTools>
          <RibbonLabel>绘图<Caret /></RibbonLabel>
        </RibbonGroup>
        <RibbonGroup $width={150}>
          <RibbonTools />
          <RibbonLabel $plain>砌体加筋二次编辑</RibbonLabel>
        </RibbonGroup>
      </Ribbon>

      <OptionBar>
        <Drop label="楼层" value="首层" width={97} flush />
        <Drop label="类别" value="墙" width={100} />
        <Drop label="构件类型" value="砌体加筋" width={100} />
        <Drop label="构件" value="LJ-1" width={100} />
        <TickLabel><Tick />旋转点</TickLabel>
        <Muted $width={27} htmlFor="angle">角度:</Muted>
        <BarInput $width={80} id="angle" defaultValue="0" />
        <Muted as="span" $width={10}>°</Muted>
        <Drop label="偏移方式" value="不偏移" width={56} />
        <Muted $width={17} htmlFor="offset-x">X=</Muted>
        <Spin><BarInput $width={62} id="offset-x" defaultValue="0" disabled /></Spin>
        <Muted as="span" $width={27}>mm</Muted>
        <Muted $width={16} htmlFor="offset-y">Y=</Muted>
        <Spin><BarInput $width={62} id="offset-y" defaultValue="0" disabled /></Spin>
        <Muted as="span" $width={27}>mm</Muted>
      </OptionBar>

      <Work>
        <Navigator>
          <NavHead>
            <svg width="14" height="14"><path d="M9.500 1V8M6 4.500H13M3.500 6V13M0 9.500H7" stroke={B} strokeWidth="2" /></svg>
            <NavSpacer />
            <ViewToggle aria-label="列表视图">
              <svg width="14" height="14" fill="none" stroke="#4f9cf0" shapeRendering="crispEdges"><path d="M1 1H3V3H1ZM1 6H3V8H1ZM1 11H3V13H1ZM6 2H13M6 7H13M6 12H13" /></svg>
            </ViewToggle>
            <ViewToggle aria-label="图标视图">
              <svg width="16" height="14" fill="none" stroke="#4f9cf0" shapeRendering="crispEdges"><path d="M1 1H15V13H1Z" /><path d="M1 3H15" strokeWidth="4" /><path d="M3 8H13M3 11H9" /><path d="M3 3H9M11 3H13" stroke="#fff" strokeDasharray="2 1" /></svg>
            </ViewToggle>
          </NavHead>
          <NavList>
            {navigation.map(([label, icon]) => (
              <NavRow key={label}>
                <NavItem $group={icon.endsWith('Folder')} $active={icon === 'tie'}><Icon name={icon} />{label}</NavItem>
              </NavRow>
            ))}
          </NavList>
          <NavScroll />
        </Navigator>

        <Middle>
          <Pane $height={330}>
            <PaneGrip><svg width="6" height="6"><path d="M0 0L6 6M6 0L0 6" stroke="#777" /></svg></PaneGrip>
            <Tabs role="tablist"><Tab role="tab" $active>构件列表</Tab><Tab role="tab">图纸管理</Tab></Tabs>
            <Tools>
              {tools.map(([label, icon]) => (
                <Tool key={label}><Icon name={icon} />{label}{icon === 'newDoc' && <Caret $small />}</Tool>
              ))}
            </Tools>
            <Search placeholder="搜索构件..." aria-label="搜索构件" />
            <Tree>
              <li>
                <TreeRow><svg width="7" height="7"><path d="M6.500 0.500V6.500H0.500Z" fill="#333" /></svg>砌体加筋</TreeRow>
                <TreeLeaf>LJ-1</TreeLeaf>
              </li>
            </Tree>
          </Pane>
          <Pane>
            <PaneGrip $thin />
            <Tabs role="tablist"><Tab role="tab" $active>属性列表</Tab><Tab role="tab">图层管理</Tab></Tabs>
            <TableArea>
              <PropTable>
                <colgroup><col width="22" /><col width="108" /><col width="322" /><col width="39" /></colgroup>
                <thead><tr><th aria-label="序号" /><th>属性名称</th><ValueHead>属性值</ValueHead><th>附加</th></tr></thead>
                <tbody>{properties.map(item => <PropertyRow key={item.no} item={item} />)}</tbody>
              </PropTable>
            </TableArea>
          </Pane>
        </Middle>

        <Canvas><ModelView /></Canvas>

        <Dock>
          <PaneGrip />
          <DockTab>显</DockTab>
          <DockPage><DockMark /></DockPage>
          <DockGrid><DockHead /><DockExpand aria-label="折叠">-</DockExpand></DockGrid>
        </Dock>
      </Work>

      <ShapeDialog />

      <Markup fill="none" stroke="#ff1f10" strokeWidth="4" strokeLinecap="round" strokeLinejoin="round">
        <path d="M7 166H192M838 467L867 471L897 475L943 480L954 483L995 488H1055" />
      </Markup>
    </Page>
  );
}
